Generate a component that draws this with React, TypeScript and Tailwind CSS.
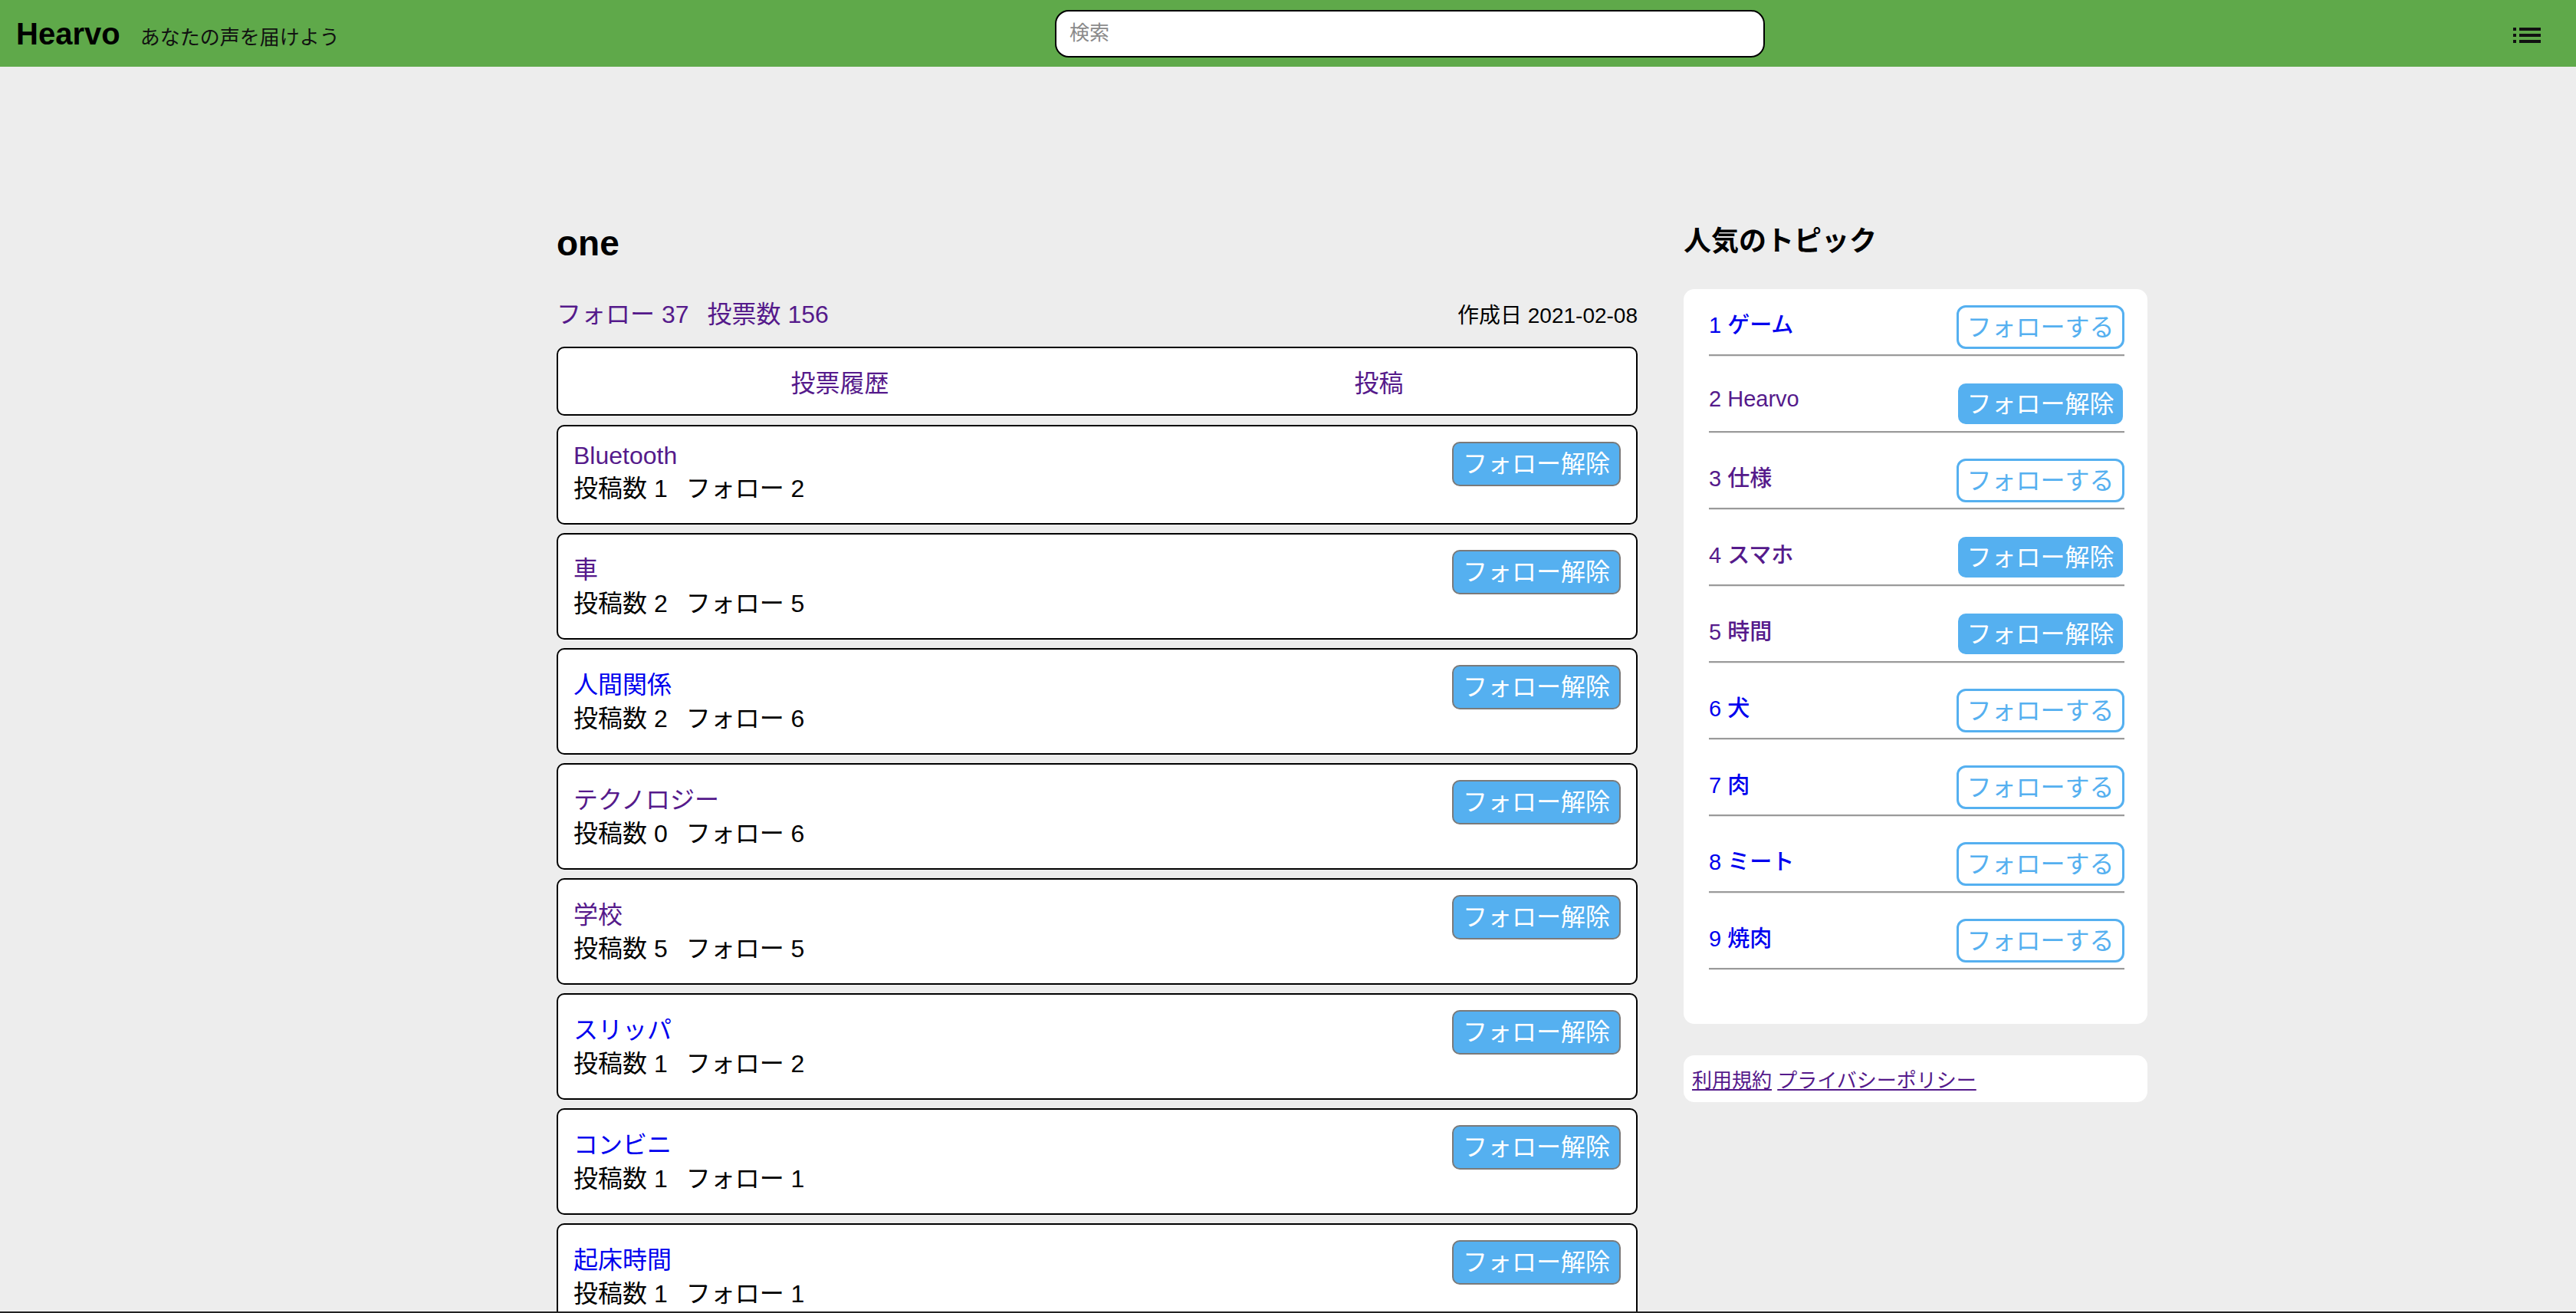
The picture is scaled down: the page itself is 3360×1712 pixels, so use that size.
import React from "react";

const VISITED = "text-[#551a8b]";
const LINK = "text-[#0000ee]";

type Topic = { name: string; posts: number; follows: number; visited: boolean };

const topics: Topic[] = [
  { name: "Bluetooth", posts: 1, follows: 2, visited: true },
  { name: "車", posts: 2, follows: 5, visited: true },
  { name: "人間関係", posts: 2, follows: 6, visited: false },
  { name: "テクノロジー", posts: 0, follows: 6, visited: true },
  { name: "学校", posts: 5, follows: 5, visited: true },
  { name: "スリッパ", posts: 1, follows: 2, visited: false },
  { name: "コンビニ", posts: 1, follows: 1, visited: false },
  { name: "起床時間", posts: 1, follows: 1, visited: false },
];

type Popular = { rank: number; name: string; visited: boolean; following: boolean };

const popular: Popular[] = [
  { rank: 1, name: "ゲーム", visited: false, following: false },
  { rank: 2, name: "Hearvo", visited: true, following: true },
  { rank: 3, name: "仕様", visited: true, following: false },
  { rank: 4, name: "スマホ", visited: true, following: true },
  { rank: 5, name: "時間", visited: true, following: true },
  { rank: 6, name: "犬", visited: false, following: false },
  { rank: 7, name: "肉", visited: false, following: false },
  { rank: 8, name: "ミート", visited: false, following: false },
  { rank: 9, name: "焼肉", visited: false, following: false },
];

function ListIcon() {
  return (
    <svg width="36" height="20" viewBox="0 0 36 20" fill="#111">
      <rect x="0" y="0" width="4" height="4" />
      <rect x="8" y="0" width="28" height="4" />
      <rect x="0" y="8" width="4" height="4" />
      <rect x="8" y="8" width="28" height="4" />
      <rect x="0" y="16" width="4" height="4" />
      <rect x="8" y="16" width="28" height="4" />
    </svg>
  );
}

export default function App() {
  return (
    <div className="relative h-[1712px] overflow-hidden bg-[#ededed] font-['Liberation_Sans','Noto_Sans_CJK_JP',sans-serif] leading-[normal] text-black">
      {/* Header */}
      <header className="flex h-[87px] items-center bg-[#5fa94a]">
        <div className="flex w-[1376px] shrink-0 items-baseline pl-[21px]">
          <span className="text-[40px] font-bold leading-none text-black">Hearvo</span>
          <span className="ml-[26px] text-[26px] leading-none text-[#111]">あなたの声を届けよう</span>
        </div>
        <input
          type="text"
          placeholder="検索"
          className="h-[62px] w-[926px] shrink-0 rounded-[18px] border-2 border-black bg-white pl-[17px] text-[26px] outline-none placeholder:text-[#8a8a8a]"
        />
        <div className="mt-[5px] flex flex-1 justify-end pr-[46px]">
          <ListIcon />
        </div>
      </header>

      {/* Main */}
      <main className="flex items-start gap-[60px] pl-[726px] pt-[198px]">
        {/* Left column */}
        <div className="w-[1410px] shrink-0">
          <h1 className="mb-[35px] text-[46px] font-bold leading-[64px]">one</h1>
          <div className="mb-[22px] flex items-baseline justify-between">
            <div className={`text-[32px] ${VISITED}`}>
              <span>フォロー 37</span>
              <span className="ml-[24px]">投票数 156</span>
            </div>
            <div className="text-[28px]">作成日 2021-02-08</div>
          </div>

          <div className="flex rounded-[10px] border-2 border-black bg-white">
            <div className={`flex-1 py-[20px] pl-[32px] text-center text-[32px] ${VISITED}`}>投票履歴</div>
            <div className={`flex-1 py-[20px] pl-[32px] text-center text-[32px] ${VISITED}`}>投稿</div>
          </div>

          <div className="mt-[12px] flex flex-col gap-[11px]">
            {topics.map((t) => (
              <div
                key={t.name}
                className="flex items-start justify-between rounded-[10px] border-2 border-black bg-white p-[20px]"
              >
                <div>
                  <div className={`text-[32px] ${t.visited ? VISITED : LINK}`}>{t.name}</div>
                  <div className="text-[32px] leading-[49px]">
                    <span>投稿数 {t.posts}</span>
                    <span className="ml-[24px]">フォロー {t.follows}</span>
                  </div>
                </div>
                <button className="h-[58px] w-[220px] rounded-[10px] border-2 border-[#7a7a7a] bg-[#55b0f0] text-[32px] leading-none text-white">
                  フォロー解除
                </button>
              </div>
            ))}
          </div>
        </div>

        {/* Right column */}
        <div className="w-[605px] shrink-0">
          <h2 className="mb-[40px] text-[36px] font-bold">人気のトピック</h2>
          <div className="rounded-[14px] bg-white pb-[37px] pl-[33px] pr-[30px] pt-[21px]">
            {popular.map((p) => (
              <div key={p.rank}>
                <div className="flex h-[57px] items-center justify-between">
                  <span className={`mb-[12px] text-[29px] font-medium ${p.visited ? VISITED : LINK}`}>
                    {p.rank} {p.name}
                  </span>
                  {p.following ? (
                    <button className="mr-[2px] h-[53px] w-[215px] rounded-[10px] bg-[#55b0f0] text-[32px] leading-none text-white">
                      フォロー解除
                    </button>
                  ) : (
                    <button className="h-[57px] w-[219px] rounded-[12px] border-[3px] border-[#55b0f0] bg-white text-[32px] leading-none text-[#55b0f0]">
                      フォローする
                    </button>
                  )}
                </div>
                <div className="mb-[33px] mt-[7px] h-[3px] border-b border-[#e6e6e6] bg-[#9a9a9a]" />
              </div>
            ))}
          </div>
          <div className="mt-[41px] rounded-[14px] bg-white px-[11px] py-[12px] text-[26px]">
            <a href="#" className={`underline ${VISITED}`}>利用規約</a>{" "}
            <a href="#" className={`underline ${VISITED}`}>プライバシーポリシー</a>
          </div>
        </div>
      </main>

      <div className="absolute bottom-0 left-0 h-[2px] w-full bg-[#222]" />
    </div>
  );
}
